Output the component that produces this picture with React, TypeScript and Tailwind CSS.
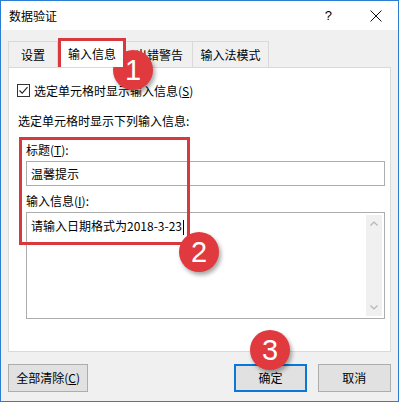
import React from "react";

const font = { fontFamily: '"Noto Sans CJK SC", "Liberation Sans", sans-serif' };

function Badge({ n, className }: { n: string; className: string }) {
  return (
    <div
      className={`absolute w-[40px] h-[40px] rounded-full bg-[#e0393e] text-white flex items-center justify-center text-[29px] leading-none shadow-[2px_3px_4px_rgba(0,0,0,0.35)] ${className}`}
      style={{ fontFamily: '"Liberation Sans", Arial, sans-serif' }}
    >
      {n}
    </div>
  );
}

export default function App() {
  return (
    <div className="w-[400px] h-[405px] bg-white relative overflow-hidden text-[12px] text-black" style={font}>
      <div className="w-[399px] h-[402px] border border-[#2a7fd4] flex flex-col">
        {/* title bar */}
        <div className="h-[29px] bg-white flex items-center shrink-0">
          <span className="ml-[8px] text-[12px]">数据验证</span>
          <span className="ml-auto mr-[38px] text-[13px]" style={{ fontFamily: '"Liberation Sans", sans-serif' }}>?</span>
          <svg width="12" height="12" viewBox="0 0 12 12" className="mr-[16px]">
            <path d="M0.5 0.5 L11.5 11.5 M11.5 0.5 L0.5 11.5" stroke="#111" strokeWidth="1" />
          </svg>
        </div>

        <div className="flex-1 bg-[#f0f0f0] flex flex-col px-[7px]">
          {/* tabs */}
          <div className="flex items-end h-[26px] mt-[11px]">
            <div className="w-[50px] h-[26px] border border-b-0 border-[#d9d9d9] flex items-center justify-center">设置</div>
            <div className="w-[68px] h-[29px] border-[3px] border-b-0 border-[#d8393f] bg-white flex items-center justify-center relative z-10">
              输入信息
            </div>
            <div className="w-[67px] h-[26px] border border-b-0 border-l-0 border-[#d9d9d9] flex items-center justify-center">出错警告</div>
            <div className="w-[76px] h-[26px] border border-b-0 border-l-0 border-[#d9d9d9] flex items-center justify-center">输入法模式</div>
          </div>

          {/* panel */}
          <div className="w-[383px] h-[285px] bg-white border border-[#d9d9d9] relative flex flex-col">
            <div className="flex items-center mt-[16px] ml-[8px] h-[13px]">
              <div className="w-[13px] h-[13px] border border-[#333] flex items-center justify-center">
                <svg width="11" height="11" viewBox="0 0 11 11">
                  <path d="M1.5 5.5 L4.2 8.2 L9.5 2.2" stroke="#222" strokeWidth="1.1" fill="none" />
                </svg>
              </div>
              <span className="ml-[4px]">
                选定单元格时显示输入信息(<span className="underline">S</span>)
              </span>
            </div>

            <div className="mt-[16px] ml-[9px] h-[16px] leading-[16px]">选定单元格时显示下列输入信息:</div>

            <div className="mt-[13px] ml-[17px] h-[16px] leading-[16px]">
              标题(<span className="underline">T</span>):
            </div>
            <div className="mt-[3px] ml-[17px] w-[359px] h-[25px] border border-[#adadad] flex items-center pl-[4px]">
              温馨提示
            </div>

            <div className="mt-[7px] ml-[17px] h-[16px] leading-[16px]">
              输入信息(<span className="underline">I</span>):
            </div>
            <div className="mt-[3px] ml-[17px] w-[359px] h-[107px] border border-[#adadad] flex">
              <div className="flex-1 pl-[4px] pt-[4px] leading-[18px]">
                请输入日期格式为2018-3-23
                <span className="inline-block w-[1px] h-[15px] bg-black align-middle ml-[1px]" />
              </div>
              <div className="w-[16px] my-[2px] mr-[2px] bg-[#f0f0f0] flex flex-col items-center justify-between py-[6px]">
                <svg width="8" height="5" viewBox="0 0 8 5">
                  <path d="M0.5 4.5 L4 1 L7.5 4.5" stroke="#b5b5b5" strokeWidth="1.2" fill="none" />
                </svg>
                <svg width="8" height="5" viewBox="0 0 8 5">
                  <path d="M0.5 0.5 L4 4 L7.5 0.5" stroke="#b5b5b5" strokeWidth="1.2" fill="none" />
                </svg>
              </div>
            </div>

            {/* highlight box 2 */}
            <div className="absolute left-[10px] top-[69px] w-[171px] h-[108px] border-[3px] border-[#d8393f]" />
          </div>

          {/* footer buttons */}
          <div className="flex mt-[12px] h-[28px]">
            <button className="w-[81px] h-[28px] bg-[#e1e1e1] border border-[#adadad] flex items-center justify-center">
              全部清除(<span className="underline">C</span>)
            </button>
            <button className="ml-[146px] w-[73px] h-[28px] bg-[#e1e1e1] border-2 border-[#0a78d7] flex items-center justify-center">
              确定
            </button>
            <button className="ml-[11px] w-[74px] h-[28px] bg-[#e1e1e1] border border-[#adadad] flex items-center justify-center">
              取消
            </button>
          </div>
        </div>
      </div>

      <Badge n="1" className="left-[113px] top-[50px]" />
      <Badge n="2" className="left-[179px] top-[232px]" />
      <Badge n="3" className="left-[250px] top-[330px]" />
    </div>
  );
}
